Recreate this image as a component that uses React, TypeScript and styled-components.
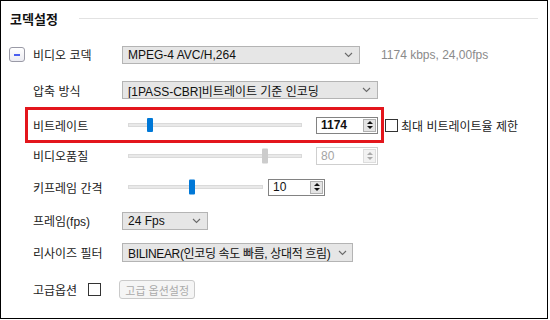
import React from "react";
import styled, { createGlobalStyle } from "styled-components";

const GlobalStyle = createGlobalStyle`
	body {
		margin: 0;
		background: #fff;
		font-family: "Liberation Sans", "Noto Sans CJK KR", sans-serif;
	}
`;

const Frame = styled.div`
	width: 548px;
	height: 319px;
	box-sizing: border-box;
	border: 1px solid #000;
	background: #fff;
	color: #222;
	font-size: 12px;
`;

const Header = styled.div`
	height: 35px;
	display: flex;
	align-items: center;
	padding: 0 9px;
`;

const Title = styled.h3`
	margin: 0;
	font-size: 13px;
	font-weight: bold;
	color: #111;
`;

const Rule = styled.div`
	flex: 1;
	height: 1px;
	margin-left: 21px;
	background: #e2e2e2;
`;

const Row = styled.div<{ $h: number; $indent?: number }>`
	height: ${(p) => p.$h}px;
	display: flex;
	align-items: center;
	padding-left: ${(p) => p.$indent ?? 32}px;
`;

const Highlight = styled.div`
	width: 359px;
	height: 36px;
	box-sizing: border-box;
	border: 3px solid #e3161c;
	display: flex;
	align-items: center;
	padding-left: 5px;
`;

const ToggleButton = styled.button`
	width: 16px;
	height: 15px;
	padding: 0;
	margin: 0 8px 0 -24px;
	border: 1px solid #9a9aa6;
	border-radius: 3px;
	background: linear-gradient(#ffffff, #ececf2);
	display: flex;
	align-items: center;
	justify-content: center;
	&::after {
		content: "";
		width: 6px;
		height: 2px;
		background: #4a5ef0;
	}
`;

const Label = styled.span<{ $w?: number }>`
	width: ${(p) => (p.$w ? `${p.$w}px` : "auto")};
	flex: none;
	color: #222;
	white-space: nowrap;
`;

const Select = styled.div<{ $w: number; $h?: number; $tight?: boolean }>`
	width: ${(p) => p.$w}px;
	height: ${(p) => p.$h ?? 18}px;
	box-sizing: border-box;
	border: 1px solid #b4b4b4;
	background: #e6e6e6;
	display: flex;
	align-items: center;
	padding: 0 ${(p) => (p.$tight ? 3 : 4)}px 0 5px;
	color: #111;
	overflow: hidden;
	span {
		flex: 1;
		white-space: nowrap;
		overflow: hidden;
		letter-spacing: ${(p) => (p.$tight ? "-0.35px" : "0")};
	}
	svg {
		flex: none;
		margin-left: ${(p) => (p.$tight ? 1 : 4)}px;
		margin-right: 2px;
	}
`;

const Info = styled.span`
	margin-left: 21px;
	color: #8a8a8a;
`;

const Track = styled.div<{ $w: number; $gap: number }>`
	position: relative;
	width: ${(p) => p.$w}px;
	height: 4px;
	box-sizing: border-box;
	margin: 0 ${(p) => p.$gap}px 0 6px;
	border: 1px solid #dadada;
	background: #e9e9e9;
`;

const Thumb = styled.div<{ $disabled?: boolean; $h: number }>`
	position: absolute;
	top: 50%;
	width: 6px;
	height: ${(p) => p.$h}px;
	transform: translateY(-50%);
	border-radius: 1px;
	background: ${(p) => (p.$disabled ? "#cccccc" : "#0078d7")};
`;

const Spinner = styled.div<{ $w: number; $h?: number; $disabled?: boolean; $bold?: boolean }>`
	width: ${(p) => p.$w}px;
	height: ${(p) => p.$h ?? 17}px;
	box-sizing: border-box;
	border: 1px solid ${(p) => (p.$disabled ? "#cfcfcf" : "#828282")};
	background: #fff;
	display: flex;
	align-items: stretch;
	padding: 1px;
	span {
		flex: 1;
		padding-left: 3px;
		line-height: ${(p) => (p.$h ?? 17) - 4}px;
		font-weight: ${(p) => (p.$bold ? "bold" : "normal")};
		color: ${(p) => (p.$disabled ? "#a4a4a4" : "#111")};
	}
`;

const SpinBox = styled.div<{ $disabled?: boolean }>`
	width: 13px;
	box-sizing: border-box;
	border: 1px solid ${(p) => (p.$disabled ? "#dddddd" : "#b0b0b0")};
	background: ${(p) => (p.$disabled ? "#f2f2f2" : "#e4e4e4")};
	display: flex;
	flex-direction: column;
	align-items: center;
	justify-content: center;
	gap: 2px;
`;

const Arrow = styled.i<{ $down?: boolean; $disabled?: boolean }>`
	width: 0;
	height: 0;
	border-left: 3px solid transparent;
	border-right: 3px solid transparent;
	${(p) =>
		p.$down
			? `border-top: 3px solid ${p.$disabled ? "#aaa" : "#111"};`
			: `border-bottom: 3px solid ${p.$disabled ? "#aaa" : "#111"};`}
`;

const Check = styled.span<{ $ml: number }>`
	width: 13px;
	height: 13px;
	box-sizing: border-box;
	flex: none;
	margin-left: ${(p) => p.$ml}px;
	border: 1px solid #333;
	background: #fff;
`;

const CheckText = styled.span`
	margin-left: 3px;
	color: #222;
`;

const DisabledButton = styled.button`
	width: 76px;
	height: 19px;
	margin-left: 18px;
	padding: 0;
	border: 1px solid #cacaca;
	border-radius: 3px;
	background: #f5f5f5;
	color: #aaaaaa;
	font-family: inherit;
	font-size: 11px;
`;

function Chevron() {
	return (
		<svg width="9" height="6" viewBox="0 0 9 6">
			<path d="M1 1 L4.5 4.5 L8 1" fill="none" stroke="#6a6a6a" strokeWidth="1.1" />
		</svg>
	);
}

function Slider({
	width,
	gap,
	ratio,
	thumbH,
	disabled,
}: {
	width: number;
	gap: number;
	ratio: number;
	thumbH: number;
	disabled?: boolean;
}) {
	return (
		<Track $w={width} $gap={gap}>
			<Thumb
				$h={thumbH}
				$disabled={disabled}
				style={{ left: Math.round(ratio * (width - 6)) - 1 }}
			/>
		</Track>
	);
}

function NumberBox({
	value,
	width,
	height,
	disabled,
	bold,
}: {
	value: number;
	width: number;
	height?: number;
	disabled?: boolean;
	bold?: boolean;
}) {
	return (
		<Spinner $w={width} $h={height} $disabled={disabled} $bold={bold}>
			<span>{value}</span>
			<SpinBox $disabled={disabled}>
				<Arrow $disabled={disabled} />
				<Arrow $down $disabled={disabled} />
			</SpinBox>
		</Spinner>
	);
}

export default function App() {
	const bitrate = 1174;
	const quality = 80;
	const keyframe = 10;

	return (
		<>
			<GlobalStyle />
			<Frame>
				<Header>
					<Title>코덱설정</Title>
					<Rule />
				</Header>

				<Row $h={37}>
					<ToggleButton aria-label="접기" />
					<Label $w={89}>비디오 코덱</Label>
					<Select $w={238}>
						<span>MPEG-4 AVC/H,264</span>
						<Chevron />
					</Select>
					<Info>1174 kbps, 24,00fps</Info>
				</Row>

				<Row $h={34}>
					<Label $w={89}>압축 방식</Label>
					<Select $w={256}>
						<span>[1PASS-CBR]비트레이트 기준 인코딩</span>
						<Chevron />
					</Select>
				</Row>

				<Row $h={36} $indent={24}>
					<Highlight>
						<Label $w={89}>비트레이트</Label>
						<Slider width={174} gap={14} ratio={(bitrate - 100) / 9500} thumbH={14} />
						<NumberBox value={bitrate} width={62} bold />
					</Highlight>
					<Check $ml={1} />
					<CheckText>최대 비트레이트율 제한</CheckText>
				</Row>

				<Row $h={25}>
					<Label $w={89}>비디오품질</Label>
					<Slider width={174} gap={14} ratio={quality / 100} thumbH={15} disabled />
					<NumberBox value={quality} width={62} height={18} disabled />
				</Row>

				<Row $h={38}>
					<Label $w={89}>키프레임 간격</Label>
					<Slider width={135} gap={5} ratio={(keyframe - 1) / 19} thumbH={15} />
					<NumberBox value={keyframe} width={57} />
				</Row>

				<Row $h={29}>
					<Label $w={89}>프레임(fps)</Label>
					<Select $w={86}>
						<span>24 Fps</span>
						<Chevron />
					</Select>
				</Row>

				<Row $h={35}>
					<Label $w={89}>리사이즈 필터</Label>
					<Select $w={231} $h={19} $tight>
						<span>BILINEAR(인코딩 속도 빠름, 상대적 흐림)</span>
						<Chevron />
					</Select>
				</Row>

				<Row $h={39}>
					<Label>고급옵션</Label>
					<Check $ml={11} />
					<DisabledButton disabled>고급 옵션설정</DisabledButton>
				</Row>
			</Frame>
		</>
	);
}
